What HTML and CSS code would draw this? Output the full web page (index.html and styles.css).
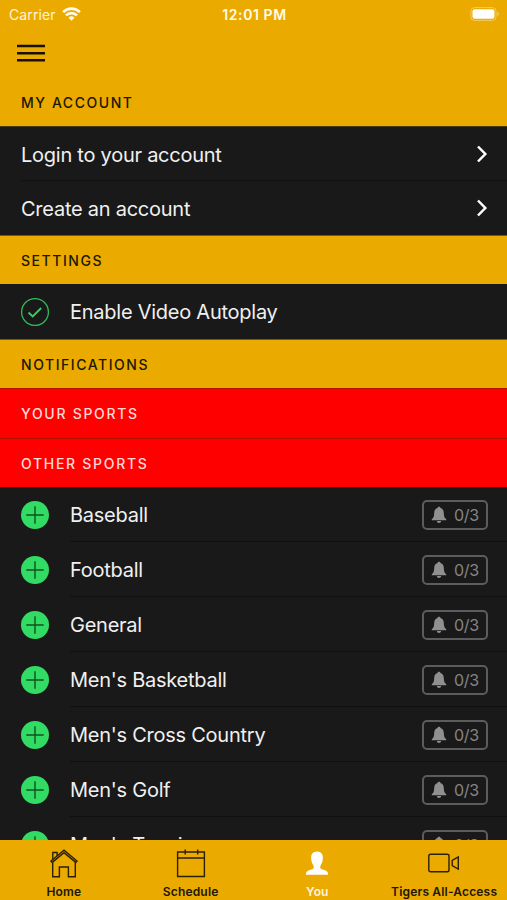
FILE: index.html
```html
<!DOCTYPE html>
<html lang="en">
<head>
<meta charset="utf-8">
<title>You</title>
<link rel="stylesheet" href="styles.css">
</head>
<body>
<svg width="0" height="0" class="defs" aria-hidden="true">
  <symbol id="plus" viewBox="0 0 28 28"><circle cx="14" cy="14" r="14" fill="#32dc64"/><path d="M14 5.300v17.400M5.300 14h17.400" stroke="#12511f" stroke-width="1.400"/></symbol>
  <symbol id="bell" viewBox="0 0 16 18"><path d="M8 .8c.9 0 1.500.6 1.500 1.300 2.300.7 3.200 2.500 3.300 4.800.1 3.600.7 4.900 2.400 6.200v1.100H.8v-1.100c1.700-1.300 2.300-2.600 2.400-6.200C3.300 4.600 4.200 2.800 6.500 2.100 6.500 1.400 7.100.8 8 .8zM5.800 14.900h4.400c-.2 1.300-1 2-2.200 2s-2-.7-2.200-2z" fill="#909090"/></symbol>
  <symbol id="chevron" viewBox="0 0 12 18"><path d="M2 1.500 9.300 9 2 16.500" fill="none" stroke="#fff" stroke-width="2.500"/></symbol>
</svg>
<div class="screen">
  <header class="top">
    <div class="status">
      <div class="carrier"><span>Carrier</span>
        <svg width="19" height="14" viewBox="0 0 19 14"><g fill="none" stroke="#fffbed" stroke-width="2.700"><path d="M1.100 5.100a12 12 0 0 1 16.800 0M4 8.400a7.900 7.900 0 0 1 11 0"/></g><path d="M9.500 13.800 6.500 10.800a4.300 4.300 0 0 1 6 0z" fill="#fffbed"/></svg>
      </div>
      <div class="clock">12:01 PM</div>
      <svg class="battery" width="30" height="14" viewBox="0 0 30 14"><rect x=".9" y=".6" width="25.200" height="12.800" rx="3.600" fill="none" stroke="#f4cb62" stroke-width="1"/><rect x="2.500" y="2.200" width="22" height="9.600" rx="2.200" fill="#fff"/><path d="M27.500 4.800c2 .8 2 3.600 0 4.400z" fill="#f4cb62"/></svg>
    </div>
    <div class="menu"><svg width="28" height="20" viewBox="0 0 28 20"><path d="M0 3h28M0 10.200h28M0 17.300h28" stroke="#171200" stroke-width="2.400"/></svg></div>
    <h2 class="account">MY ACCOUNT</h2>
  </header>
  <main class="content">
    <div class="row link"><span class="label">Login to your account</span><svg width="12" height="18"><use href="#chevron"/></svg></div>
    <div class="row link"><span class="label">Create an account</span><svg width="12" height="18"><use href="#chevron"/></svg></div>
    <h2 class="section">SETTINGS</h2>
    <div class="row autoplay"><svg class="mark" width="28" height="28" viewBox="0 0 28 28"><g fill="none" stroke="#30b95a"><circle cx="14" cy="14" r="13.400" stroke-width="1.300"/><path d="m7.500 14.500 4.200 4 8.500-8.500" stroke="#32d363" stroke-width="1.800"/></g></svg><span class="label">Enable Video Autoplay</span></div>
    <h2 class="section">NOTIFICATIONS</h2>
    <h2 class="section red your">YOUR SPORTS</h2>
    <h2 class="section red">OTHER SPORTS</h2>
    <div class="row sport"><svg class="mark" width="28" height="28"><use href="#plus"/></svg><span class="label">Baseball</span><span class="badge"><svg width="16" height="18"><use href="#bell"/></svg>0/3</span></div>
    <div class="row sport"><svg class="mark" width="28" height="28"><use href="#plus"/></svg><span class="label">Football</span><span class="badge"><svg width="16" height="18"><use href="#bell"/></svg>0/3</span></div>
    <div class="row sport"><svg class="mark" width="28" height="28"><use href="#plus"/></svg><span class="label">General</span><span class="badge"><svg width="16" height="18"><use href="#bell"/></svg>0/3</span></div>
    <div class="row sport"><svg class="mark" width="28" height="28"><use href="#plus"/></svg><span class="label">Men's Basketball</span><span class="badge"><svg width="16" height="18"><use href="#bell"/></svg>0/3</span></div>
    <div class="row sport"><svg class="mark" width="28" height="28"><use href="#plus"/></svg><span class="label">Men's Cross Country</span><span class="badge"><svg width="16" height="18"><use href="#bell"/></svg>0/3</span></div>
    <div class="row sport"><svg class="mark" width="28" height="28"><use href="#plus"/></svg><span class="label">Men's Golf</span><span class="badge"><svg width="16" height="18"><use href="#bell"/></svg>0/3</span></div>
    <div class="row sport"><svg class="mark" width="28" height="28"><use href="#plus"/></svg><span class="label">Men's Tennis</span><span class="badge"><svg width="16" height="18"><use href="#bell"/></svg>0/3</span></div>
  </main>
  <nav class="tabs">
    <div class="tab"><svg width="32" height="32" viewBox="0 0 32 32"><g fill="none" stroke="#2b2000" stroke-width="1.400"><path d="M3 13 16 2.200 29 13l-1.200 1.400L16 4.600 4.200 14.400z"/><path d="M4.700 14.200v14.500h6.700V19h9v9.700h6.900V14.200M4.800 11.200V4.500h4.300v3.200"/></g></svg><span>Home</span></div>
    <div class="tab"><svg width="32" height="32" viewBox="0 0 32 32"><path d="M2.600 4h26.800v24.500H2.600zM2.600 10h26.800M10.200 1.500v5M22.700 1.500v5" fill="none" stroke="#2b2000" stroke-width="1.400"/></svg><span>Schedule</span></div>
    <div class="tab active"><svg width="32" height="32" viewBox="0 0 32 32"><path d="M16 3.500c-4.300 0-6.200 2.900-5.800 7 .1 1.300 0 1.500.3 2.500.4 2.500 1.800 3.700 2.200 5.200.4 2.300-.7 3-3.200 3.600-3.300.9-4.500 2-4.700 4.900h22.400c-.2-2.900-1.400-4-4.700-4.900-2.500-.6-3.600-1.300-3.200-3.600.4-1.500 1.800-2.700 2.200-5.200.3-1 .2-1.200.3-2.500.4-4.100-1.500-7-5.800-7z" fill="#fff"/></svg><span>You</span></div>
    <div class="tab"><svg width="32" height="32" viewBox="0 0 32 32"><g fill="none" stroke="#2b2000" stroke-width="1.400"><rect x=".8" y="6.200" width="20.200" height="17.600" rx="1.800"/><path d="M24.200 12.300 30.300 9v12l-6.100-3.300z"/></g></svg><span>Tigers All-Access</span></div>
  </nav>
</div>
</body>
</html>
```
FILE: styles.css
```css
* { box-sizing: border-box; }
body { margin: 0; font-family: Inter, "Liberation Sans", sans-serif; background: #191919; }
.defs { position: absolute; }
.screen { width: 507px; height: 900px; display: flex; flex-direction: column; overflow: hidden; }
.top { height: 126px; background: #ebaa00; flex: none; }
.status { height: 28px; display: grid; grid-template-columns: 1fr auto 1fr; align-items: center; color: #fff5d5; font-size: 14px; padding: 0 7px 0 9px; }
.carrier { display: flex; align-items: center; gap: 6px; letter-spacing: 0.1px; }
.clock { font-weight: 600; font-size: 14px; letter-spacing: 0.6px; color: #fffbed; }
.battery { justify-self: end; }
.menu { height: 50px; display: flex; align-items: center; padding-left: 17px; }
h2 { margin: 0; color: #201700; font-size: 14px; font-weight: 500; letter-spacing: 1.55px; white-space: nowrap; }
.account { height: 50px; line-height: 50px; padding-left: 21px; }
.content { flex: 1; min-height: 0; overflow: hidden; border-top: 1px solid #4a3a08; }
.row { display: flex; align-items: center; position: relative; padding: 0 19px 0 21px; color: #f0f0f0; background: #191919; }
.link { height: 54px; justify-content: space-between; }
.link:first-child::after, .sport::after { content: ""; position: absolute; left: 21px; right: 0; bottom: 0; height: 1px; background: #101010; }
.sport::after { left: 70px; }
.label { font-size: 20px; line-height: 28px; white-space: nowrap; letter-spacing: -0.25px; padding-top: 1px; }
.mark { margin-right: 21px; flex: none; }
.section { height: 49px; line-height: 49px; padding-left: 21px; background: #ebaa00; border-top: 1px solid #7a5a06; }
.autoplay { height: 55px; }
.red { background: #f00; color: #ffd9d5; border-top-color: #b01000; letter-spacing: 1.7px; }
.your { height: 50px; }
.sport { height: 55px; }
.badge { margin-left: auto; width: 66px; height: 30px; border: 2px solid #5c5c5c; border-radius: 5px; display: flex; align-items: center; justify-content: center; gap: 7px; color: #858585; font-size: 16px; letter-spacing: -0.3px; }
.tabs { height: 60px; flex: none; display: grid; grid-template-columns: repeat(4, 1fr); background: #ebaa00; }
.tab { display: flex; flex-direction: column; align-items: center; padding: 8px 0 0 1px; color: #201700; font-size: 12px; font-weight: 600; letter-spacing: 0.18px; line-height: 23px; white-space: nowrap; }
.active { color: #fff5df; }
```
